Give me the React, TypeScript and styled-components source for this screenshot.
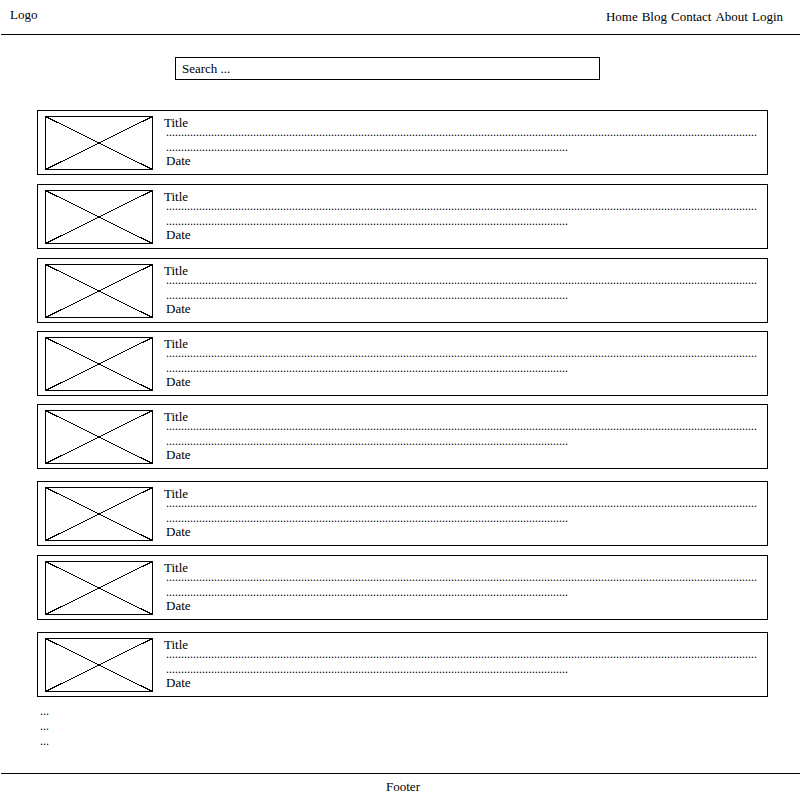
import React from "react";
import styled, { createGlobalStyle } from "styled-components";

const GlobalStyle = createGlobalStyle`
  *, *::before, *::after { box-sizing: border-box; }
  body {
    margin: 0;
    background: #fff;
    color: #000;
    font: 13px/15px "Liberation Serif", "Times New Roman", serif;
  }
`;

const Page = styled.div`
  display: flex;
  flex-direction: column;
  min-height: 100vh;
  padding-left: 1px;
`;

const Header = styled.header`
  display: flex;
  justify-content: space-between;
  align-items: flex-start;
  padding: 7px 17px 10px 9px;
  border-bottom: 1px solid #000;
`;

const NavLink = styled.a`
  color: inherit;
  text-decoration: none;
`;

const Logo = styled(NavLink)``;

const Nav = styled.nav`
  display: flex;
  gap: 4px;
  padding-top: 2px;
`;

const SearchForm = styled.form`
  display: flex;
  margin: 22px 200px 30px 174px;
`;

const SearchInput = styled.input`
  flex: 1;
  min-width: 0;
  height: 23px;
  padding: 0 6px;
  border: 1px solid #000;
  border-radius: 0;
  background: #fff;
  color: #000;
  font: inherit;
  outline: none;

  &::placeholder {
    color: #000;
    opacity: 1;
  }
`;

const Posts = styled.main`
  display: flex;
  flex-direction: column;
  flex: 1;
  margin: 0 32px 0 36px;
`;

const Card = styled.article<{ $gap: number }>`
  display: flex;
  gap: 11px;
  margin-bottom: ${({ $gap }) => $gap}px;
  padding: 5px 9px 4px 7px;
  border: 1px solid #000;
`;

const Thumb = styled.svg`
  display: block;
  flex: none;
  width: 108px;
  height: 54px;
  fill: none;
  stroke: #000;
`;

const CardBody = styled.div`
  flex: 1;
  min-width: 0;
`;

const Title = styled.h2`
  margin: 0 0 -4px;
  font: inherit;
  line-height: 13px;
`;

const Excerpt = styled.p`
  margin: 0;
  padding-left: 2px;
  font-size: 12px;
  overflow-wrap: anywhere;
`;

const PostDate = styled.div`
  padding-left: 2px;
  line-height: 11px;
`;

const More = styled.div`
  display: flex;
  flex-direction: column;
  padding-left: 3px;
  font-size: 12px;
`;

const Footer = styled.footer`
  padding: 5px 0 6px 5px;
  border-top: 1px solid #000;
  text-align: center;
`;

const links = ["Home", "Blog", "Contact", "About", "Login"];
const excerpt = ".".repeat(331);
const posts = [9, 9, 8, 8, 12, 9, 12, 7].map((gap, id) => ({ id, gap }));

function Placeholder() {
  return (
    <Thumb viewBox="0 0 108 54" role="img" aria-label="Post image">
      <rect x="0.5" y="0.5" width="107" height="53" shapeRendering="crispEdges" />
      <path d="M0.5 0.5L107.5 53.5M107.5 0.5L0.5 53.5" shapeRendering="crispEdges" />
    </Thumb>
  );
}

export default function App() {
  return (
    <>
      <GlobalStyle />
      <Page>
        <Header>
          <Logo href="#">Logo</Logo>
          <Nav>
            {links.map((label) => (
              <NavLink key={label} href={`#${label.toLowerCase()}`}>
                {label}
              </NavLink>
            ))}
          </Nav>
        </Header>
        <SearchForm role="search" onSubmit={(event) => event.preventDefault()}>
          <SearchInput type="text" aria-label="Search" placeholder="Search ..." />
        </SearchForm>
        <Posts>
          {posts.map(({ id, gap }) => (
            <Card key={id} $gap={gap}>
              <Placeholder />
              <CardBody>
                <Title>Title</Title>
                <Excerpt>{excerpt}</Excerpt>
                <PostDate>Date</PostDate>
              </CardBody>
            </Card>
          ))}
          <More>
            <span>...</span>
            <span>...</span>
            <span>...</span>
          </More>
        </Posts>
        <Footer>Footer</Footer>
      </Page>
    </>
  );
}
